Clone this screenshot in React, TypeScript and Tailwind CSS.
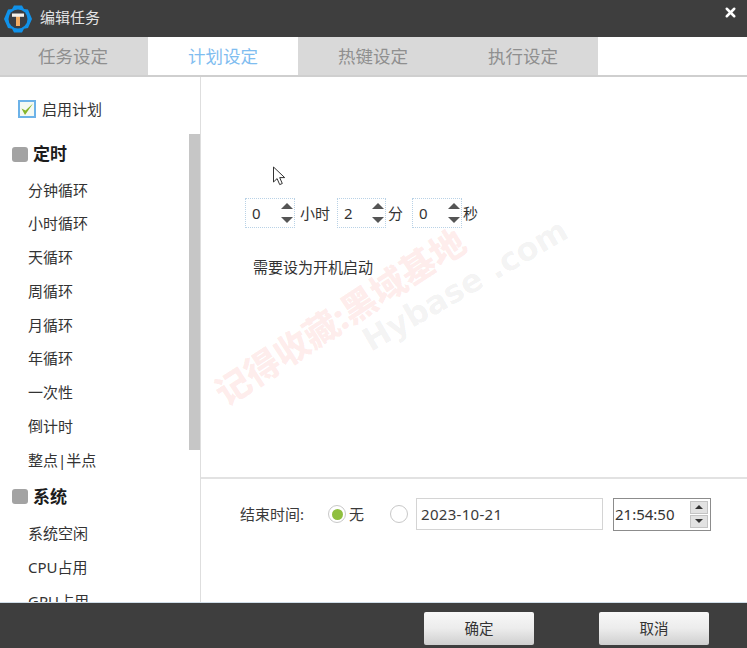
import { X } from "lucide-react";

const font = { fontFamily: '"Noto Sans", "Noto Sans CJK SC", sans-serif' };

const tabs = [
  { label: "任务设定", active: false, width: "w-[148px] pr-[2px]" },
  { label: "计划设定", active: true, width: "w-[150px]" },
  { label: "热键设定", active: false, width: "w-[150px]" },
  { label: "执行设定", active: false, width: "w-[150px]" },
];

const timerItems = ["分钟循环", "小时循环", "天循环", "周循环", "月循环", "年循环", "一次性", "倒计时", "整点|半点"];
const systemItems = ["系统空闲", "CPU占用", "GPU占用"];

function Logo() {
  return (
    <svg width="30" height="30" viewBox="0 0 30 30">
      <path
        d="M11 1.5h8l2 3.5 4 .5 4 9.5-4 9-4 .7-2 3.8h-8l-2-3.8-4-.7-4-9 4-9.5 4-.5z"
        fill="#1092ea"
      />
      <circle cx="15" cy="15" r="9.5" fill="#3a3d42" />
      <path d="M13 12h4v10h-4z" fill="#f2ab62" />
      <path d="M9 9.5h12v3.3H9z" fill="#f4f0ea" />
    </svg>
  );
}

function Triangle({ down, className }: { down?: boolean; className?: string }) {
  return (
    <svg width="12" height="6" viewBox="0 0 12 6" className={className}>
      <path d={down ? "M0 0h12L6 6z" : "M6 0l6 6H0z"} fill="#555" />
    </svg>
  );
}

function Spinner({ value, width }: { value: string; width: string }) {
  return (
    <div className={`${width} h-[30px] border border-dotted border-[#b9d2e6] flex items-center justify-between pl-[6px] pr-[1px] text-[15px] text-[#333]`}>
      <span>{value}</span>
      <div className="flex flex-col gap-[8px]">
        <Triangle />
        <Triangle down />
      </div>
    </div>
  );
}

function SectionHeader({ label }: { label: string }) {
  return (
    <div className="h-[34px] mb-[2px] pl-[12px] flex items-center gap-[5px]">
      <div className="w-[16px] h-[15px] rounded-[3px] bg-[#a3a3a3]" />
      <span className="text-[17px] font-bold text-[#1c1c1c]">{label}</span>
    </div>
  );
}

function MenuItem({ label }: { label: string }) {
  return (
    <div className="h-[33.75px] pl-[28px] flex items-center text-[15px] text-[#333] shrink-0">{label}</div>
  );
}

function Radio({ checked }: { checked?: boolean }) {
  return (
    <div className="w-[18px] h-[18px] rounded-full border border-[#c8c8c8] flex items-center justify-center">
      {checked && <div className="w-[11px] h-[11px] rounded-full bg-[#8fbf3f]" />}
    </div>
  );
}

export default function App() {
  return (
    <div className="relative w-[747px] h-[648px] overflow-hidden bg-white flex flex-col" style={font}>
      {/* title bar */}
      <div className="h-[37px] bg-[#3e3e3e] flex items-center pl-[3px] pr-[9px] shrink-0">
        <Logo />
        <span className="ml-[7px] mb-[3px] text-[15px] text-[#e4e4e4]">编辑任务</span>
        <X className="ml-auto mb-[12px] w-[15px] h-[15px] text-white" strokeWidth={4} />
      </div>

      {/* tabs */}
      <div className="h-[40px] flex border-b-2 border-[#cfcfcf] shrink-0">
        {tabs.map((tab) => (
          <div
            key={tab.label}
            className={`${tab.width} flex items-center justify-center text-[17.5px] ${
              tab.active ? "bg-white text-[#7fbdf0]" : "bg-[#d9d9d9] text-[#8f8f8f]"
            }`}
          >
            {tab.label}
          </div>
        ))}
      </div>

      <div className="flex-1 flex min-h-0">
        {/* left menu */}
        <div className="relative w-[201px] shrink-0 overflow-hidden border-r border-[#dedede]">
          <div className="pt-[20px] pl-[18px] flex items-center gap-[6px] h-[44px]">
            <div className="w-[18px] h-[18px] border-2 border-[#6cb2e8] flex items-center justify-center bg-[#f4f9f2]">
              <svg width="14" height="14" viewBox="0 0 14 14">
                <path d="M1.5 6.5L5 13 13 1.5 5.5 8.5z" fill="#86b52a" />
              </svg>
            </div>
            <span className="text-[15px] text-[#333]">启用计划</span>
          </div>
          <div className="mt-[16px]">
            <SectionHeader label="定时" />
            {timerItems.map((item) => (
              <MenuItem key={item} label={item} />
            ))}
            <div className="h-[3px]" />
            <SectionHeader label="系统" />
            <div className="h-[1px]" />
            {systemItems.map((item) => (
              <MenuItem key={item} label={item} />
            ))}
          </div>
          <div className="absolute left-[189px] top-[57px] w-[11px] h-[316px] bg-[#c6c6c6]" />
        </div>

        {/* right panel */}
        <div className="flex-1 flex flex-col min-w-0">
          <div className="flex-1 pt-[121px] pl-[44px]">
            <div className="flex items-center text-[15px] text-[#333]">
              <Spinner value="0" width="w-[50px]" />
              <span className="ml-[5px] w-[37px]">小时</span>
              <Spinner value="2" width="w-[49px]" />
              <span className="ml-[2px] w-[24px]">分</span>
              <Spinner value="0" width="w-[50px]" />
              <span className="ml-[1px]">秒</span>
            </div>
            <div className="mt-[28px] ml-[8px] text-[15px] leading-[22px] text-[#333]">需要设为开机启动</div>
          </div>

          <div className="h-[125px] border-t-2 border-[#e2e2e2] shrink-0 pt-[19px] pl-[39px] flex items-start">
            <div className="h-[32px] flex items-center text-[15px] text-[#3a3a3a]">
              <span className="w-[88px]">结束时间:</span>
              <Radio checked />
              <span className="ml-[3px] w-[41px]">无</span>
              <Radio />
              <div className="ml-[8px] w-[187px] h-[32px] border border-[#d4d4d4] flex items-center pl-[4px] tracking-[0.3px]">
                2023-10-21
              </div>
              <div className="ml-[10px] w-[98px] h-[33px] border border-[#8c8c8c] flex items-center justify-between pl-[1px] pr-[2px] text-[#333]">
                <span>21:54:50</span>
                <div className="flex flex-col gap-[1px]">
                  <div className="w-[18px] h-[13px] bg-[#e2e2e2] border border-[#c4c4c4] flex items-center justify-center">
                    <svg width="8" height="4" viewBox="0 0 8 4"><path d="M4 0l4 4H0z" fill="#333" /></svg>
                  </div>
                  <div className="w-[18px] h-[13px] bg-[#e2e2e2] border border-[#c4c4c4] flex items-center justify-center">
                    <svg width="8" height="4" viewBox="0 0 8 4"><path d="M0 0h8L4 4z" fill="#333" /></svg>
                  </div>
                </div>
              </div>
            </div>
          </div>
        </div>
      </div>

      {/* footer */}
      <div className="h-[46px] bg-[#3e3e3e] border-t border-[#cfdde8] shrink-0 flex items-start justify-end pt-[9px] pr-[38px] gap-[65px]">
        {["确定", "取消"].map((label) => (
          <div
            key={label}
            className="w-[110px] h-[33px] rounded-[2px] bg-gradient-to-b from-[#f8f8f8] via-[#ececec] to-[#cfcfcf] flex items-center justify-center text-[14.5px] text-[#333]"
          >
            {label}
          </div>
        ))}
      </div>

      {/* cursor captured in the screenshot */}
      <svg className="absolute left-[272px] top-[166px]" width="16" height="22" viewBox="0 0 16 22">
        <path d="M1.5 1v15l3.6-3.4 2.6 6 2.6-1.1-2.6-5.9h5z" fill="#fff" stroke="#333" strokeWidth="1" />
      </svg>

      {/* watermark */}
      <div className="absolute left-[190px] top-[295px] w-[300px] text-center text-[35px] leading-[44px] font-black whitespace-nowrap text-[#f9423a]/10 -rotate-[33deg]">
        记得收藏:黑域基地
      </div>
      <div className="absolute left-[340px] top-[263px] w-[250px] text-center text-[32px] leading-[44px] font-bold whitespace-nowrap text-[#555]/8 -rotate-[30deg]" style={{ fontFamily: '"DejaVu Sans", sans-serif' }}>
        Hybase .com
      </div>
    </div>
  );
}
